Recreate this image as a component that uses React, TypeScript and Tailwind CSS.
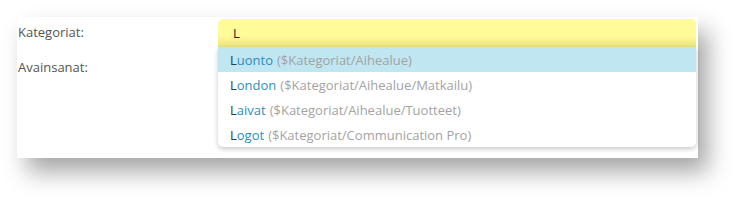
const items = [
  { name: 'Luonto', path: '($Kategoriat/Aihealue)' },
  { name: 'London', path: '($Kategoriat/Aihealue/Matkailu)' },
  { name: 'Laivat', path: '($Kategoriat/Aihealue/Tuotteet)' },
  { name: 'Logot', path: '($Kategoriat/Communication Pro)' },
];

export default function App() {
  return (
    <div className="w-[746px] h-[207px] bg-white p-[17px] font-['Open_Sans',sans-serif] text-[13px]">
      <div className="w-[681px] h-[141px] bg-white shadow-[10px_14px_22px_rgba(0,0,0,0.35)] pt-[2px]">
        {/* Kategoriat row */}
        <div className="flex">
          <div className="w-[201px] pl-[1px] pt-[4px] leading-[18px] text-[#555]">Kategoriat:</div>
          <div className="relative w-[478px]">
            <div className="h-[28px] rounded-t-[5px] bg-gradient-to-b from-[#fffb98] from-60% to-[#ebe37a] pl-[15px] flex items-center pt-[2px] text-[#222]">
              L
            </div>
            <ul className="absolute left-0 right-0 top-[28px] bg-white rounded-b-[5px] shadow-[0_2px_5px_rgba(0,0,0,0.22)] overflow-hidden">
              {items.map((item, i) => (
                <li
                  key={item.name}
                  className={`h-[25px] pl-[12px] flex items-center pt-[3px] ${i === 0 ? 'bg-[#bfe6f1]' : ''} ${i === 3 ? 'h-[24px]' : ''}`}
                >
                  <span className="text-[#2b3a44]">L</span>
                  <span className="text-[#2e8dbd]">{item.name.slice(1)}</span>
                  <span className="text-[#a3a3a3] ml-[4px]">{item.path}</span>
                </li>
              ))}
            </ul>
          </div>
        </div>
        {/* Avainsanat row */}
        <div className="pl-[1px] pt-[11px] leading-[18px] text-[#555]">Avainsanat:</div>
      </div>
    </div>
  );
}
